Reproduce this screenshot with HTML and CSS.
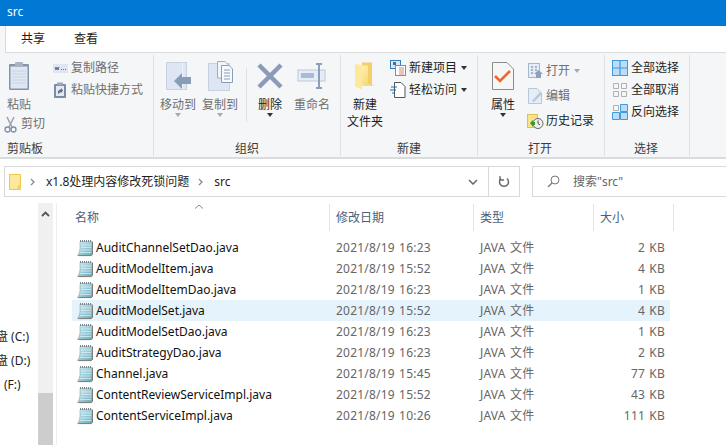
FILE: index.html
```html
<!DOCTYPE html>
<html lang="zh-CN">
<head>
<meta charset="utf-8">
<title>src</title>
<link rel="stylesheet" href="styles.css">
</head>
<body>
<svg class="defs" width="0" height="0" aria-hidden="true">
  <defs>
    <linearGradient id="paper" x1="0" y1="0" x2="1" y2="1">
      <stop offset="0" stop-color="#d4edf3"/>
      <stop offset="1" stop-color="#62a9bf"/>
    </linearGradient>
    <linearGradient id="folderg" x1="0" y1="0" x2="1" y2="1">
      <stop offset="0" stop-color="#fff0ae"/>
      <stop offset="1" stop-color="#f3ce63"/>
    </linearGradient>
    <symbol id="note" viewBox="0 0 16 18">
      <path d="M3 2.500H15.500V15.500L14 16.500H0.500Q2.500 14 3 10Z" fill="url(#paper)" stroke="#8fb4c0" stroke-width="0.700"/>
      <path d="M1.500 16.600H14.200L15.500 15.500V3" fill="none" stroke="#7d7468" stroke-width="0.900"/>
      <path d="M3.500 1V3M5.500 1V3M7.500 1V3M9.500 1V3M11.500 1V3M13.500 1V3" stroke="#7d878c" stroke-width="1"/>
      <path d="M4 6H14M4 8.500H14M3.500 11H14M3 13.500H14" stroke="#e2f2f6" stroke-width="0.700"/>
    </symbol>
  </defs>
</svg>

<header class="titlebar">src</header>

<nav class="tabs">
  <div class="tabs-inner"><span class="tab">共享</span><span class="tab">查看</span></div>
</nav>

<section class="ribbon">
  <div class="group g-clip">
    <div class="group-body">
      <div class="col-left">
        <div class="big dim">
          <svg class="i-paste" width="22" height="30" viewBox="0 0 22 30"><rect x="1" y="3" width="20" height="26" rx="1" fill="#8494ac"/><rect x="2.500" y="5.500" width="17" height="22" fill="#dfe7f2"/><path d="M4 10H18M4 13H18M4 16H18M4 19H18M4 22H18" stroke="#c8d2e1"/><rect x="7" y="1" width="8" height="5" rx="1" fill="#a9b4c6"/></svg>
          <span>粘贴</span>
        </div>
        <div class="small cut dim">
          <svg width="13" height="17" viewBox="0 0 13 17"><path d="M3 1L8 11M10 1L5 11" stroke="#9aa1ab" stroke-width="1.500" fill="none"/><circle cx="3.500" cy="13.500" r="2.500" fill="none" stroke="#7c8fa9" stroke-width="1.300"/><circle cx="9.500" cy="13.500" r="2.500" fill="none" stroke="#7c8fa9" stroke-width="1.300"/></svg>
          <span>剪切</span>
        </div>
      </div>
      <div class="col-small">
        <div class="small dim">
          <svg width="15" height="9" viewBox="0 0 15 9"><rect width="15" height="9" fill="#dfe6f1"/><path d="M2 3L3 6L4 3L5 6L6 3M8 5.500H9M10 5.500H11M12 5.500H13" stroke="#60728c" fill="none"/></svg>
          <span>复制路径</span>
        </div>
        <div class="small dim">
          <svg width="15" height="16" viewBox="0 0 15 16"><rect x="1" y="2" width="12" height="14" rx="1" fill="#7b8ca6"/><rect x="3" y="4" width="8" height="10" fill="#e3e9f3"/><rect x="4" y="0.500" width="6" height="3" fill="#9ba8bb"/><path d="M5 12V9L8 7V6L10 8.500L8 11V10L6.500 11Z" fill="#5d6f8a"/></svg>
          <span>粘贴快捷方式</span>
        </div>
      </div>
    </div>
    <div class="group-label">剪贴板</div>
  </div>

  <div class="group g-org">
    <div class="group-body">
      <div class="big w36 dim">
        <svg width="28" height="28" viewBox="0 0 28 28"><rect x="2.500" y="0.500" width="20" height="27" fill="#dde6f2" stroke="#c6d2e2"/><path d="M18.500 0.500V27.500" stroke="#eef2f8"/><path d="M10 19L18 11V15H27V22H18V27Z" fill="#8a9db8"/></svg>
        <span>移动到</span><i class="caret grey"></i>
      </div>
      <div class="big w36 dim">
        <svg width="28" height="30" viewBox="0 0 28 30"><rect x="2.500" y="2.500" width="21" height="27" fill="#dde6f2" stroke="#c6d2e2"/><path d="M11.500 0.500H19L22 3.500V17H11.500Z" fill="#f2f5f9" stroke="#9fadc2"/><path d="M15.500 4.500H23L26.500 8V21.500H15.500Z" fill="#f7f9fc" stroke="#8a9db8"/><path d="M18 9H24M18 12H24M18 15H24M18 18H24" stroke="#8a9db8"/></svg>
        <span>复制到</span><i class="caret grey"></i>
      </div>
      <div class="vline"></div>
      <div class="big w24">
        <svg width="26" height="26" viewBox="0 0 26 26"><path d="M2 2L24 24M24 2L2 24" stroke="#8a9ab8" stroke-width="4.500"/></svg>
        <span>删除</span><i class="caret"></i>
      </div>
      <div class="big w36 dim">
        <svg width="30" height="26" viewBox="0 0 30 26"><rect x="1" y="7" width="27" height="11" fill="#e6edf6" stroke="#b9c9dc"/><rect x="4" y="10" width="13" height="5" fill="#a9bbd5"/><path d="M19 1H25M22 1V25M19 25H25" stroke="#8c9fb8" stroke-width="2" fill="none"/></svg>
        <span>重命名</span>
      </div>
    </div>
    <div class="group-label">组织</div>
  </div>

  <div class="group g-new">
    <div class="group-body">
      <div class="big w36">
        <svg width="20" height="27" viewBox="0 0 20 27"><path d="M7 0H17V23H7Z" fill="#f3cf6b"/><path d="M0 1L7 3V27L0 24Z" fill="#fde99c"/><path d="M7 3H13V21L20 23H7Z" fill="url(#folderg)"/></svg>
        <span>新建<br>文件夹</span>
      </div>
      <div class="col-small tall">
        <div class="small">
          <svg width="16" height="16" viewBox="0 0 16 16"><rect x="0.500" y="0.500" width="10" height="8" fill="#dbe8f5" stroke="#2f7fbf"/><rect x="3" y="2" width="3" height="3" fill="#546a80"/><rect x="5.500" y="5.500" width="10" height="10" fill="#fff" stroke="#8a8a8a"/><path d="M9 8H14M9 10H14M9 12H14M9 14H14" stroke="#d08a7a"/></svg>
          <span>新建项目</span><i class="caret side"></i>
        </div>
        <div class="small">
          <svg width="16" height="16" viewBox="0 0 16 16"><path d="M4.500 0.500H11L15 4.500V15.500H4.500Z" fill="#fff" stroke="#555"/><path d="M1 5H7M0 8H6M2 11H5" stroke="#1f6fb0" stroke-width="1.200"/></svg>
          <span>轻松访问</span><i class="caret side"></i>
        </div>
      </div>
    </div>
    <div class="group-label">新建</div>
  </div>

  <div class="group g-open">
    <div class="group-body">
      <div class="big w24">
        <svg width="22" height="28" viewBox="0 0 22 28"><path d="M0.500 0.500H15L21.500 7V27.500H0.500Z" fill="#f6f6f6" stroke="#8c8c8c"/><path d="M3 14L8 19L18 9" fill="none" stroke="#f4652a" stroke-width="2.600"/></svg>
        <span>属性</span><i class="caret"></i>
      </div>
      <div class="col-small open-col">
        <div class="small dim">
          <svg width="15" height="16" viewBox="0 0 15 16"><rect x="0.500" y="0.500" width="11" height="14" fill="#e6edf6" stroke="#a7b6ca"/><path d="M3 4H5M7 4H9M3 7H5M7 7H9M3 10H5" stroke="#8ea1ba" stroke-width="1.500"/><path d="M8 15V11H6L10.500 7L15 11H13V15Z" fill="#8ea1ba"/></svg>
          <span>打开</span><i class="caret side grey"></i>
        </div>
        <div class="small dim">
          <svg width="15" height="16" viewBox="0 0 15 16"><path d="M0.500 0.500H9L13.500 5V15.500H0.500Z" fill="#e6edf6" stroke="#b8c6d8"/><path d="M4 13L12 4L14 6L6 14Z" fill="#b9c8dc"/></svg>
          <span>编辑</span>
        </div>
        <div class="small hist">
          <svg width="17" height="15" viewBox="0 0 17 15"><rect x="0.500" y="0.500" width="10" height="13" fill="#fbe38c" stroke="#e0c052"/><circle cx="11" cy="9.500" r="5" fill="#f0f0f0" stroke="#666"/><path d="M11 6.500V9.500L13 11" stroke="#444" fill="none"/><path d="M3 9L6 6V8H8V11H6V13Z" fill="#2f9e2f"/></svg>
          <span>历史记录</span>
        </div>
      </div>
    </div>
    <div class="group-label">打开</div>
  </div>

  <div class="group g-sel">
    <div class="group-body">
      <div class="col-small sel-col">
        <div class="small">
          <svg width="16" height="16" viewBox="0 0 16 16"><rect x="0.500" y="0.500" width="15" height="15" fill="#bcdcf7" stroke="#3d9be0"/><path d="M8 0V16M0 8H16" stroke="#3d9be0" stroke-width="1.200"/></svg>
          <span>全部选择</span>
        </div>
        <div class="small">
          <svg width="16" height="16" viewBox="0 0 16 16"><path d="M1.500 1.500H6.500V6.500H1.500ZM9.500 1.500H14.500V6.500H9.500ZM1.500 9.500H6.500V14.500H1.500ZM9.500 9.500H14.500V14.500H9.500Z" fill="none" stroke="#b0b0b0"/></svg>
          <span>全部取消</span>
        </div>
        <div class="small">
          <svg width="16" height="16" viewBox="0 0 16 16"><path d="M1.500 1.500H6.500V6.500H1.500Z" fill="none" stroke="#b0b0b0"/><path d="M8.500 0.500H15.500V7.500H8.500ZM0.500 8.500H7.500V15.500H0.500ZM8.500 8.500H15.500V15.500H8.500Z" fill="#bcdcf7" stroke="#3d9be0"/></svg>
          <span>反向选择</span>
        </div>
      </div>
    </div>
    <div class="group-label">选择</div>
  </div>
</section>

<div class="pathrow">
  <div class="address">
    <svg class="addr-folder" width="12" height="16" viewBox="0 0 12 16"><path d="M0.500 0.500H11.500V15.500H0.500Z" fill="#fde99c" stroke="#eec64f"/><path d="M9 11H11.500V15.500H8Z" fill="#f3d26e"/></svg>
    <svg class="chev" width="6" height="8" viewBox="0 0 6 8"><path d="M1 1L4 4L1 7" fill="none" stroke="#8a8a8a" stroke-width="1.300"/></svg>
    <span class="crumb">x1.8处理内容修改死锁问题</span>
    <svg class="chev" width="6" height="8" viewBox="0 0 6 8"><path d="M1 1L4 4L1 7" fill="none" stroke="#8a8a8a" stroke-width="1.300"/></svg>
    <span class="crumb">src</span>
    <span class="fill"></span>
    <span class="addr-btn"><svg width="10" height="6" viewBox="0 0 10 6"><path d="M1 1L5 5L9 1" fill="none" stroke="#666" stroke-width="1.500"/></svg></span>
    <span class="addr-btn refresh"><svg width="12" height="13" viewBox="0 0 12 13"><path d="M3 3.500A4.500 4.500 0 1 0 9 3.500" fill="none" stroke="#6b6b6b" stroke-width="1.500"/><path d="M2 1V5H6" fill="none" stroke="#6b6b6b" stroke-width="1.300"/></svg></span>
  </div>
  <div class="search">
    <svg width="13" height="13" viewBox="0 0 13 13"><circle cx="8" cy="5" r="4" fill="none" stroke="#777"/><path d="M5 8L1 12" stroke="#777" stroke-width="1.300"/></svg>
    <span>搜索"src"</span>
  </div>
</div>

<main class="pane">
  <aside class="tree">
    <div class="drives">
      <div>盘 (C:)</div>
      <div>盘 (D:)</div>
      <div class="drive-f">(F:)</div>
    </div>
    <div class="scrollbar">
      <svg class="sb-up" width="9" height="6" viewBox="0 0 9 6"><path d="M1 5L4.500 1.500L8 5" fill="none" stroke="#555" stroke-width="1.800"/></svg>
      <div class="sb-thumb"></div>
    </div>
  </aside>
  <div class="list">
    <div class="head">
      <div class="hcell name-h">名称<svg class="sort" width="10" height="5" viewBox="0 0 10 5"><path d="M1 4.500L5 1L9 4.500" fill="none" stroke="#888"/></svg></div>
      <div class="hcell">修改日期</div>
      <div class="hcell">类型</div>
      <div class="hcell">大小</div>
    </div>
    <div class="row"><span class="nm"><svg width="16" height="18"><use href="#note"/></svg>AuditChannelSetDao.java</span><span>2021/8/19 16:23</span><span>JAVA 文件</span><span class="sz">2 KB</span></div>
    <div class="row"><span class="nm"><svg width="16" height="18"><use href="#note"/></svg>AuditModelItem.java</span><span>2021/8/19 15:52</span><span>JAVA 文件</span><span class="sz">4 KB</span></div>
    <div class="row"><span class="nm"><svg width="16" height="18"><use href="#note"/></svg>AuditModelItemDao.java</span><span>2021/8/19 16:23</span><span>JAVA 文件</span><span class="sz">1 KB</span></div>
    <div class="row sel"><span class="nm"><svg width="16" height="18"><use href="#note"/></svg>AuditModelSet.java</span><span>2021/8/19 15:52</span><span>JAVA 文件</span><span class="sz">4 KB</span></div>
    <div class="row"><span class="nm"><svg width="16" height="18"><use href="#note"/></svg>AuditModelSetDao.java</span><span>2021/8/19 16:23</span><span>JAVA 文件</span><span class="sz">1 KB</span></div>
    <div class="row"><span class="nm"><svg width="16" height="18"><use href="#note"/></svg>AuditStrategyDao.java</span><span>2021/8/19 16:23</span><span>JAVA 文件</span><span class="sz">2 KB</span></div>
    <div class="row"><span class="nm"><svg width="16" height="18"><use href="#note"/></svg>Channel.java</span><span>2021/8/19 15:45</span><span>JAVA 文件</span><span class="sz">77 KB</span></div>
    <div class="row"><span class="nm"><svg width="16" height="18"><use href="#note"/></svg>ContentReviewServiceImpl.java</span><span>2021/8/19 15:52</span><span>JAVA 文件</span><span class="sz">43 KB</span></div>
    <div class="row"><span class="nm"><svg width="16" height="18"><use href="#note"/></svg>ContentServiceImpl.java</span><span>2021/8/19 10:26</span><span>JAVA 文件</span><span class="sz">111 KB</span></div>
  </div>
</main>
</body>
</html>
```
FILE: styles.css
```css
* { box-sizing: border-box; }
html, body { margin: 0; height: 100%; }
body {
  width: 726px; height: 445px; overflow: hidden; background: #fff;
  font: 12px/16px "Noto Sans", "Noto Sans CJK SC", sans-serif; color: #1e1e1e;
  display: flex; flex-direction: column;
}
svg { display: block; flex: none; }
.defs { position: absolute; }
i { font-style: normal; }

.titlebar { height: 26px; background: #0078d4; color: #fff; padding: 4px 7px; flex: none; }

.tabs { height: 27px; background: #f5f6f7; padding-left: 5px; flex: none; }
.tabs-inner { height: 27px; background: #fff; border-left: 1px solid #dadbdc; border-bottom: 1px solid #dadbdc; display: flex; padding: 5px 0 0 15px; gap: 29px; }

.ribbon { height: 106px; background: #f5f6f7; border-bottom: 2px solid #dadbdc; display: flex; flex: none; }
.group { border-right: 1px solid #e0e1e3; margin: 2px 0 0; display: flex; flex-direction: column; height: 101px; }
.group-body { flex: 1; display: flex; min-height: 0; }
.group-label { text-align: center; height: 15px; color: #3c3c3c; }
.g-clip { width: 154px; }
.g-clip .group-label { text-align: left; padding-left: 7px; }
.g-org { width: 187px; }
.g-new { width: 137px; }
.g-open { width: 127px; }
.g-open .group-label { padding-right: 2px; }
.g-sel { width: 85px; }
.g-sel .group-label { padding-right: 2px; }

.big { display: flex; flex-direction: column; align-items: center; text-align: center; padding-top: 6px; flex: none; }
.big > svg { height: 30px; margin-bottom: 5px; }
.big span { line-height: 17px; white-space: nowrap; }
.w36 { width: 36px; }
.w24 { width: 24px; }
.dim { color: #6f6f6f; }

.caret { width: 0; height: 0; border: 3.500px solid transparent; border-top: 4px solid #333; border-bottom: 0; margin-top: 0; }
.caret.grey { border-top-color: #a9a9a9; }
.caret.side { margin: 0 0 0 1px; }

.small { display: flex; align-items: center; gap: 3px; height: 22px; white-space: nowrap; }

.g-clip .group-body { padding-left: 4px; }
.col-left { width: 49px; }
.col-left .big { width: 30px; }
.cut { gap: 4px; }
.g-clip .col-small { padding-top: 2px; }
.g-clip .col-small svg { width: 15px; }
.g-org .group-body { padding-left: 6px; gap: 6px; }
.vline { width: 1px; height: 54px; background: #e0e1e3; margin: 13px 5px 0 2px; }
.g-org .w24 + .w36 { margin-left: 6px; }
.g-new .group-body { padding-left: 6px; gap: 7px; }
.tall { padding-top: 2px; }
.g-open .group-body { padding-left: 13px; gap: 14px; }
.open-col { padding-top: 5px; display: flex; flex-direction: column; gap: 3px; margin-left: -1px; }
.hist { margin-left: -1px; gap: 2px; }
.g-sel .group-body { padding: 2px 0 0 7px; }

.pathrow { height: 40px; display: flex; padding: 7px 0 0 4px; gap: 12px; flex: none; }
.address { width: 516px; height: 31px; border: 1px solid #d9d9d9; display: flex; align-items: center; padding-left: 4px; }
.addr-folder { margin-right: 9px; }
.crumb { margin: 0 11px; }
.chev + .crumb { margin: 0 9px 0 10px; }
.fill { flex: 1; }
.addr-btn { width: 31px; height: 29px; display: flex; align-items: center; justify-content: center; }
.refresh { border-left: 1px solid #d9d9d9; }
.search { flex: 1; height: 31px; border: 1px solid #d9d9d9; border-right: 0; display: flex; align-items: center; padding-left: 14px; gap: 13px; color: #666; }

.pane { flex: 1; display: flex; min-height: 0; }
.tree { width: 57px; display: flex; border-right: 1px solid #eee; flex: none; margin-top: 4px; }
.drives { width: 38px; padding-top: 122px; white-space: nowrap; overflow: hidden; line-height: 24px; color: #1e1e1e; }
.drives div { margin-left: -4px; }
.drives .drive-f { margin-left: 4px; }
.scrollbar { width: 15px; background: #f0f0f0; display: flex; flex-direction: column; justify-content: space-between; align-items: center; }
.sb-up { margin-top: 8px; }
.sb-thumb { width: 15px; height: 52px; background: #cdcdcd; }

.list { padding-left: 15px; flex: 1; }
.head { display: grid; grid-template-columns: 258px 144px 120px 80px; height: 32px; padding-top: 5px; color: #4c607a; margin-bottom: 6px; }
.row { display: grid; grid-template-columns: 257px 144px 120px 77px; width: 598px; }
.hcell { position: relative; padding: 6px 0 0 6px; border-right: 1px solid #e5e5e5; height: 27px; }
.name-h { padding-left: 3px; }
.sort { position: absolute; left: 122px; top: 0; }
.row { height: 21px; align-items: center; color: #666; white-space: nowrap; }
.row > span { padding-left: 7px; letter-spacing: 0.200px; word-spacing: 1px; }
.row .nm { display: flex; align-items: center; gap: 3px; color: #111; padding-left: 5px; letter-spacing: 0; word-spacing: 0; }
.row .sz { text-align: right; padding: 0 5px 0 0; }
.sel { background: #e5f3fc; }
```
